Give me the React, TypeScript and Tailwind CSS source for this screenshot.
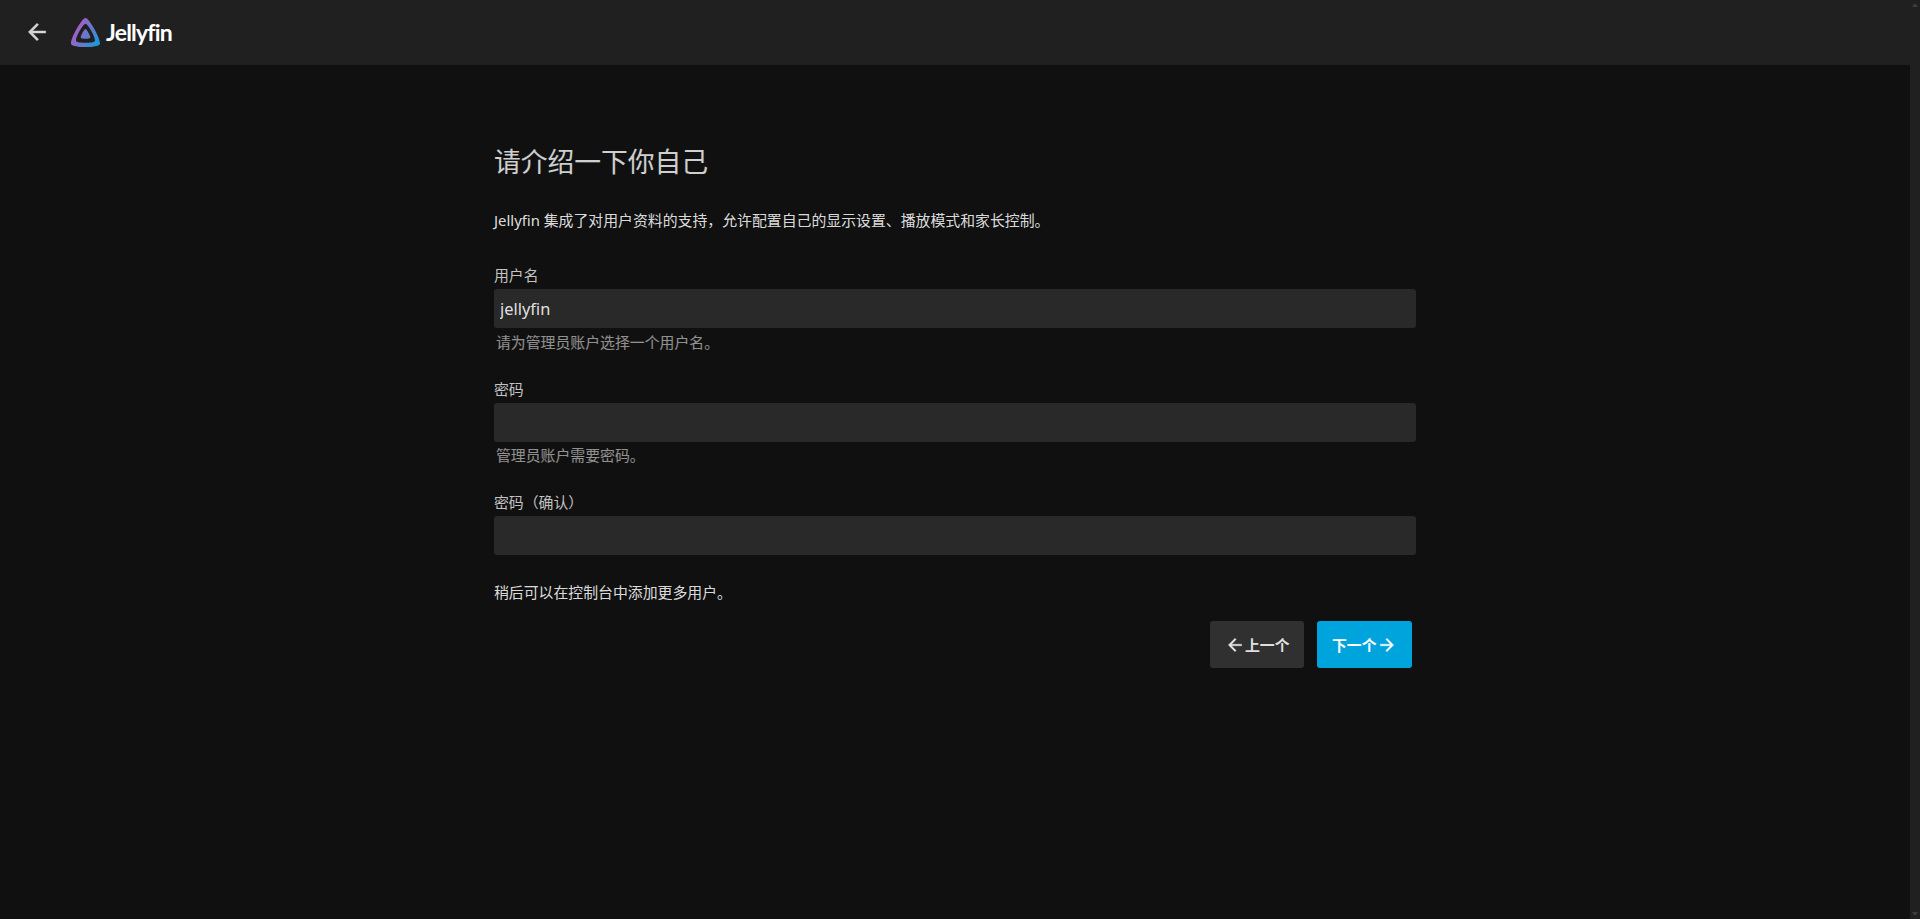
import { useState } from 'react'

const ArrowBack = ({ className }: { className: string }) => (
  <svg viewBox="0 0 24 24" fill="currentColor" stroke="currentColor" strokeWidth="0.4" className={className}>
    <path d="M20 11H7.83l5.59-5.59L12 4l-8 8 8 8 1.41-1.41L7.83 13H20v-2z" />
  </svg>
)

const ArrowForward = ({ className }: { className: string }) => (
  <svg viewBox="0 0 24 24" fill="currentColor" stroke="currentColor" strokeWidth="0.4" className={className}>
    <path d="M12 4l-1.41 1.41L16.17 11H4v2h12.17l-5.58 5.59L12 20l8-8z" />
  </svg>
)

const Logo = () => (
  <div className="ml-[21px] flex items-center">
    <svg viewBox="56 56 400 400" className="h-[29px] w-[29px]">
      <defs>
        <linearGradient
          id="logo"
          gradientUnits="userSpaceOnUse"
          x1="110.25"
          y1="213.3"
          x2="496.14"
          y2="436.09"
        >
          <stop offset="0" stopColor="#aa5cc3" />
          <stop offset="1" stopColor="#00a4dc" />
        </linearGradient>
      </defs>
      <path
        fill="url(#logo)"
        d="M190.56 329.07c8.63 17.3 122.4 17.12 130.93 0 8.52-17.1-47.9-119.78-65.46-119.8-17.57 0-74.1 102.5-65.47 119.8z"
      />
      <path
        fill="url(#logo)"
        d="M58.75 417.03c25.97 52.15 368.86 51.55 394.55 0S308.93 56.08 256.03 56.08c-52.92 0-223.25 308.8-197.28 360.95zm68.04-45.25c-17.02-34.17 94.6-236.5 129.26-236.5 34.67 0 146.1 202.7 129.26 236.5-16.83 33.8-241.5 34.17-258.52 0z"
      />
    </svg>
    <span className="ml-[6px] font-[Lato] text-[23px] leading-[29px] font-bold tracking-[-0.8px] text-white">
      Jellyfin
    </span>
  </div>
)

type FieldProps = {
  label: string
  type?: string
  value: string
  description?: string
  className: string
  onChange: (value: string) => void
}

const Field = ({ label, type = 'text', value, description, className, onChange }: FieldProps) => (
  <label className={`flex flex-col ${className}`}>
    <span className="h-5 leading-5 text-white/75">{label}</span>
    <input
      type={type}
      value={value}
      onChange={(e) => onChange(e.target.value)}
      className="h-[39px] w-full rounded-[3px] bg-[#292929] px-[6px] text-[16.4px] text-white/87 outline-none"
    />
    {description && (
      <span className="h-5 pl-[2px] leading-5 text-white/54">{description}</span>
    )}
  </label>
)

const App = () => {
  const [username, setUsername] = useState<string>('jellyfin')
  const [password, setPassword] = useState<string>('')
  const [confirm, setConfirm] = useState<string>('')

  return (
    <div className="flex h-screen flex-col overflow-hidden bg-[#101010] font-['Noto_Sans','Noto_Sans_CJK_SC',sans-serif] text-[14.88px] text-white/87">
      <div className="flex min-h-0 flex-1">
        <div className="flex min-w-0 flex-1 flex-col">
          <header className="flex h-[65px] items-center bg-[#202020] pl-6">
            <button className="pb-[2px] text-white/80">
              <ArrowBack className="h-[26px] w-[26px]" />
            </button>
            <Logo />
          </header>

          <main className="mx-auto w-[922px] pt-[77px]">
            <h1 className="h-10 text-[26.78px] leading-10 text-white/80">请介绍一下你自己</h1>
            <p className="mt-7 h-5 leading-5">
              Jellyfin 集成了对用户资料的支持，允许配置自己的显示设置、播放模式和家长控制。
            </p>
            <form className="mt-[35px]">
              <Field
                label="用户名"
                value={username}
                description="请为管理员账户选择一个用户名。"
                className="gap-1"
                onChange={setUsername}
              />
              <Field
                label="密码"
                type="password"
                value={password}
                description="管理员账户需要密码。"
                className="mt-[27px] gap-[3.5px]"
                onChange={setPassword}
              />
              <Field
                label="密码（确认）"
                type="password"
                value={confirm}
                className="mt-[27px] gap-1"
                onChange={setConfirm}
              />
              <p className="mt-[27px] h-5 leading-5">稍后可以在控制台中添加更多用户。</p>
              <div className="mt-[19px] flex justify-end gap-[13px] pr-1 font-bold">
                <button
                  type="button"
                  className="flex h-[47px] w-[94px] items-center rounded-[3px] bg-[#303030] pl-[15px] text-white/87"
                >
                  <ArrowBack className="h-5 w-5" />
                  <span className="pt-px">上一个</span>
                </button>
                <button
                  type="button"
                  className="flex h-[47px] w-[95px] items-center rounded-[3px] bg-[#00a4dc] pl-[15px] text-white"
                >
                  <span className="pt-px">下一个</span>
                  <ArrowForward className="h-5 w-5" />
                </button>
              </div>
            </form>
          </main>
        </div>

        {/* scrollbar */}
        <div className="flex w-[10px] flex-col items-center justify-between bg-[#202020] pt-1 pb-1">
          <svg viewBox="0 0 6 3" className="h-[3px] w-[6px]" fill="#3b3b3b">
            <path d="M2 0h2l2 3H0z" />
          </svg>
          <svg viewBox="0 0 6 3" className="h-[3px] w-[6px]" fill="#3b3b3b">
            <path d="M0 0h6L4 3H2z" />
          </svg>
        </div>
      </div>
    </div>
  )
}

export default App
